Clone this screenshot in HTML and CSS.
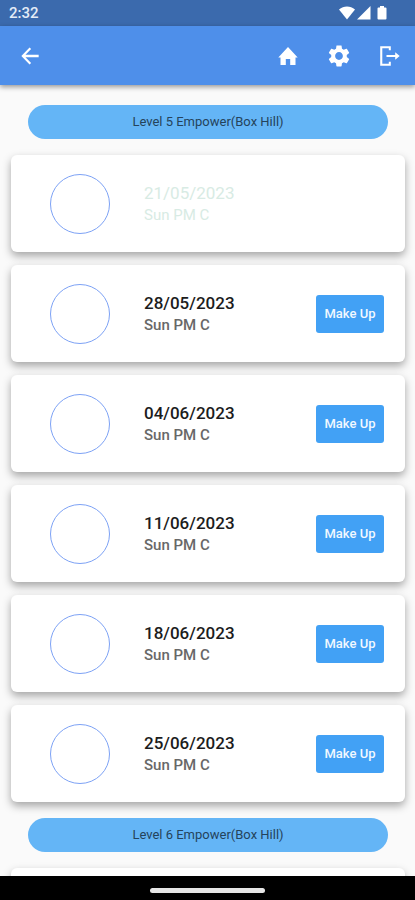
FILE: index.html
```html
<!DOCTYPE html>
<html lang="en">
<head>
<meta charset="utf-8">
<meta name="viewport" content="width=device-width, initial-scale=1">
<title>Classes</title>
<link rel="stylesheet" href="styles.css">
</head>
<body>
<div class="status">
  <span>2:32</span>
  <div class="status-icons">
    <svg width="16" height="14" viewBox="0 0 16 14"><path d="M0 3.6C4.6-.4 11.4-.4 16 3.6L8 13.5z"/></svg>
    <svg width="14" height="14" viewBox="0 0 14 14"><path d="M13.5 0v13.5H0z"/></svg>
    <svg class="battery" width="10" height="14" viewBox="0 0 10 14"><path d="M3 0h4v1.5h1.5q1 0 1 1v10q0 1-1 1h-7q-1 0-1-1v-10q0-1 1-1H3z"/></svg>
  </div>
</div>
<header class="bar">
  <button class="icon" aria-label="Back"><svg width="26" height="26" viewBox="0 0 24 24"><path d="M20 10.800H7.830l5.200-5.200L11.600 4.200 4 12l7.600 7.800 1.430-1.400-5.200-5.200H20z"/></svg></button>
  <nav class="actions">
    <button class="icon" aria-label="Home"><svg width="24" height="24" viewBox="0 0 24 24"><path d="M4.500 21v-7.500H2.300L12 3l9.700 10.500h-2.200V21h-5.300v-6H9.800v6z"/></svg></button>
    <button class="icon" aria-label="Settings"><svg width="26" height="26" viewBox="0 0 24 24"><path d="M19.14 12.94c.04-.3.06-.61.06-.94 0-.32-.02-.64-.07-.94l2.03-1.58c.18-.14.23-.41.12-.61l-1.92-3.32c-.12-.22-.37-.29-.59-.22l-2.39.96c-.5-.38-1.03-.7-1.62-.94l-.36-2.54c-.04-.24-.24-.41-.48-.41h-3.84c-.24 0-.43.17-.47.41l-.36 2.54c-.59.24-1.13.57-1.62.94l-2.39-.96c-.22-.08-.47 0-.59.22L2.74 8.87c-.12.21-.08.47.12.61l2.03 1.58c-.05.3-.09.63-.09.94s.02.64.07.94l-2.03 1.58c-.18.14-.23.41-.12.61l1.92 3.32c.12.22.37.29.59.22l2.39-.96c.5.38 1.03.7 1.62.94l.36 2.54c.05.24.24.41.48.41h3.84c.24 0 .44-.17.47-.41l.36-2.54c.59-.24 1.13-.56 1.62-.94l2.39.96c.22.08.47 0 .59-.22l1.92-3.32c.12-.22.07-.47-.12-.61zM12 15.6c-1.98 0-3.6-1.62-3.6-3.6s1.62-3.6 3.6-3.6 3.6 1.62 3.6 3.6-1.62 3.6-3.6 3.6z"/></svg></button>
    <button class="icon" aria-label="Log out"><svg width="24" height="24" viewBox="0 0 24 24"><path d="M2.200 2.300h10.600v4h-2V4.300H4.300v15.400h6.500v-2h2v4H2.200zM8.500 11h8.700V8.200L21.700 12l-4.500 3.800V13H8.500z"/></svg></button>
  </nav>
</header>
<main class="content">
  <h2 class="level">Level 5 Empower(Box Hill)</h2>
  <ul class="cards">
    <li class="card past"><span class="ring"></span><div class="info"><p class="date">21/05/2023</p><p class="class">Sun PM C</p></div></li>
    <li class="card"><span class="ring"></span><div class="info"><p class="date">28/05/2023</p><p class="class">Sun PM C</p></div><button class="makeup">Make Up</button></li>
    <li class="card"><span class="ring"></span><div class="info"><p class="date">04/06/2023</p><p class="class">Sun PM C</p></div><button class="makeup">Make Up</button></li>
    <li class="card"><span class="ring"></span><div class="info"><p class="date">11/06/2023</p><p class="class">Sun PM C</p></div><button class="makeup">Make Up</button></li>
    <li class="card"><span class="ring"></span><div class="info"><p class="date">18/06/2023</p><p class="class">Sun PM C</p></div><button class="makeup">Make Up</button></li>
    <li class="card"><span class="ring"></span><div class="info"><p class="date">25/06/2023</p><p class="class">Sun PM C</p></div><button class="makeup">Make Up</button></li>
  </ul>
  <h2 class="level">Level 6 Empower(Box Hill)</h2>
  <ul class="cards">
    <li class="card"></li>
  </ul>
</main>
<footer class="system-nav"><span class="handle"></span></footer>
</body>
</html>
```
FILE: styles.css
```css
* { box-sizing: border-box; }
body {
  margin: 0;
  height: 100vh;
  display: flex;
  flex-direction: column;
  font-family: Roboto, "Liberation Sans", sans-serif;
  background: #fafafa;
  overflow: hidden;
}
h2, p, ul { margin: 0; padding: 0; list-style: none; }
button { border: 0; padding: 0; font-family: inherit; cursor: pointer; }
svg { display: block; fill: #fff; }

.status {
  flex: none;
  height: 26px;
  padding: 0 28px 0 9px;
  display: flex;
  align-items: center;
  justify-content: space-between;
  background: #3b6aad;
  color: #e4ecf7;
  font-size: 15px;
  font-weight: 500;
}
.status-icons { display: flex; gap: 2px; }
.battery { margin-left: 4px; }

.bar {
  flex: none;
  height: 59px;
  padding: 0 12px 0 17px;
  display: flex;
  align-items: center;
  justify-content: space-between;
  background: #4e8fea;
  box-shadow: 0 2px 5px rgba(0, 0, 0, .4);
  z-index: 1;
}
.actions { display: flex; gap: 25px; }
.icon {
  width: 26px;
  height: 26px;
  display: grid;
  place-items: center;
  background: none;
}

.content {
  flex: 1;
  min-height: 0;
  padding: 20px 10px 0 11px;
  overflow: hidden;
}
.level {
  height: 34px;
  margin: 0 17px 16px;
  border-radius: 17px;
  background: #64b5f6;
  color: #25435b;
  font-size: 13px;
  font-weight: 400;
  line-height: 34px;
  text-align: center;
}
.cards {
  display: grid;
  gap: 13px;
  margin-bottom: 16px;
}
.card {
  height: 97px;
  padding: 0 21px 0 39px;
  display: flex;
  align-items: center;
  border-radius: 6px;
  background: #fff;
  box-shadow: 0 4px 8px rgba(0, 0, 0, .34);
}
.ring {
  width: 60px;
  height: 60px;
  border: 1px solid #7da2f5;
  border-radius: 50%;
}
.info { flex: 1; margin-left: 34px; }
.date {
  color: #1c1c1c;
  font-size: 17px;
  font-weight: 500;
  line-height: 22px;
}
.class {
  color: #686868;
  font-size: 15px;
  font-weight: 500;
  line-height: 22px;
}
.past .date, .past .class { color: #d8ebe4; font-weight: 400; }
.makeup {
  width: 68px;
  height: 38px;
  border-radius: 3px;
  background: #42a1f5;
  color: #f1f8ff;
  font-size: 13px;
  font-weight: 500;
}

.system-nav {
  flex: none;
  height: 24px;
  padding-top: 4px;
  display: grid;
  place-items: center;
  background: #000;
  z-index: 1;
}
.handle {
  width: 115px;
  height: 5px;
  border-radius: 3px;
  background: #e6e6e6;
}
```
